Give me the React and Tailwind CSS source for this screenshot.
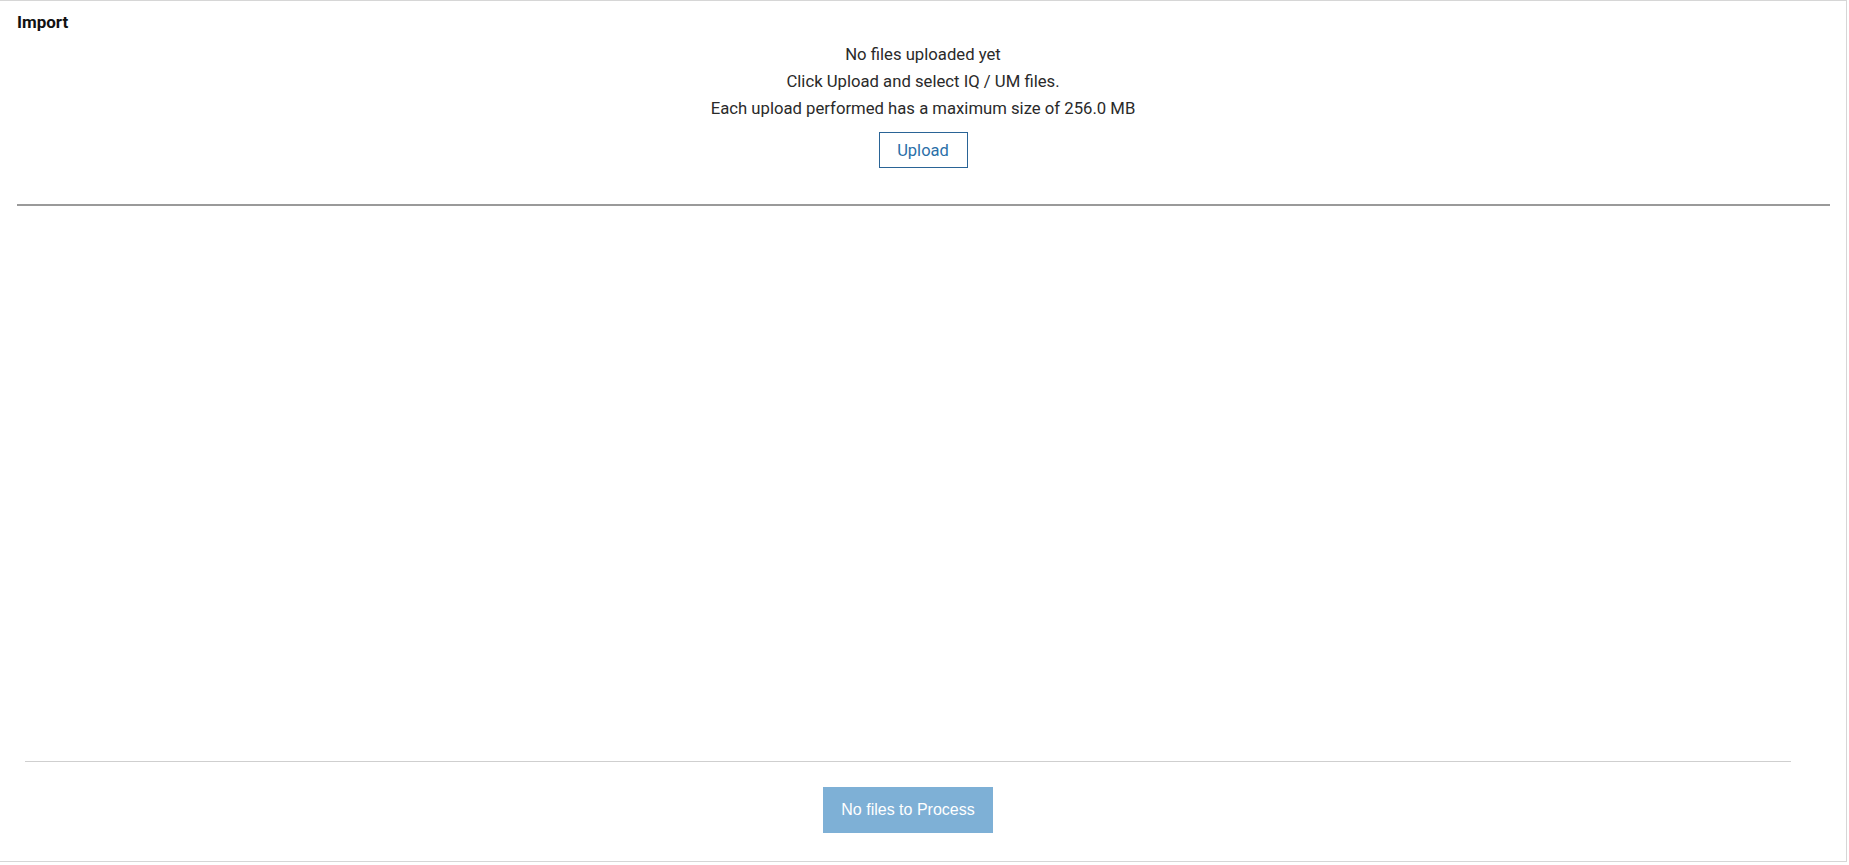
export default function App() {
  return (
    <div className="w-[1849px] h-[865px] bg-white" style={{ fontFamily: "Roboto, 'Liberation Sans', sans-serif" }}>
      <div className="w-[1847px] h-[862px] border-t border-r border-b border-[#d6d6d6] flex flex-col">
        <div className="pl-[17px] pt-[9px] text-[17px] leading-[24px] font-bold text-[#111]">Import</div>
        <div className="flex flex-col items-center mt-[7px] text-[16.7px] leading-[27px] text-[#2a2a2a]">
          <div>No files uploaded yet</div>
          <div>Click Upload and select IQ / UM files.</div>
          <div>Each upload performed has a maximum size of 256.0 MB</div>
          <button className="mt-[10px] w-[89px] h-[36px] border border-[#2a6496] text-[#2a6fa8] text-[16.5px] bg-white">Upload</button>
        </div>
        <div className="mt-[36px] ml-[17px] mr-[16px] h-[2px] bg-[#9a9a9a]"></div>
        <div className="flex-1"></div>
        <div className="ml-[25px] mr-[55px] border-t border-[#cfcfcf] flex justify-center pt-[25px] pb-[28px]">
          <button className="w-[170px] h-[46px] bg-[#7eb0d6] text-white text-[16px]" style={{ fontFamily: "'Liberation Sans', Arial, sans-serif" }}>No files to Process</button>
        </div>
      </div>
    </div>
  );
}
